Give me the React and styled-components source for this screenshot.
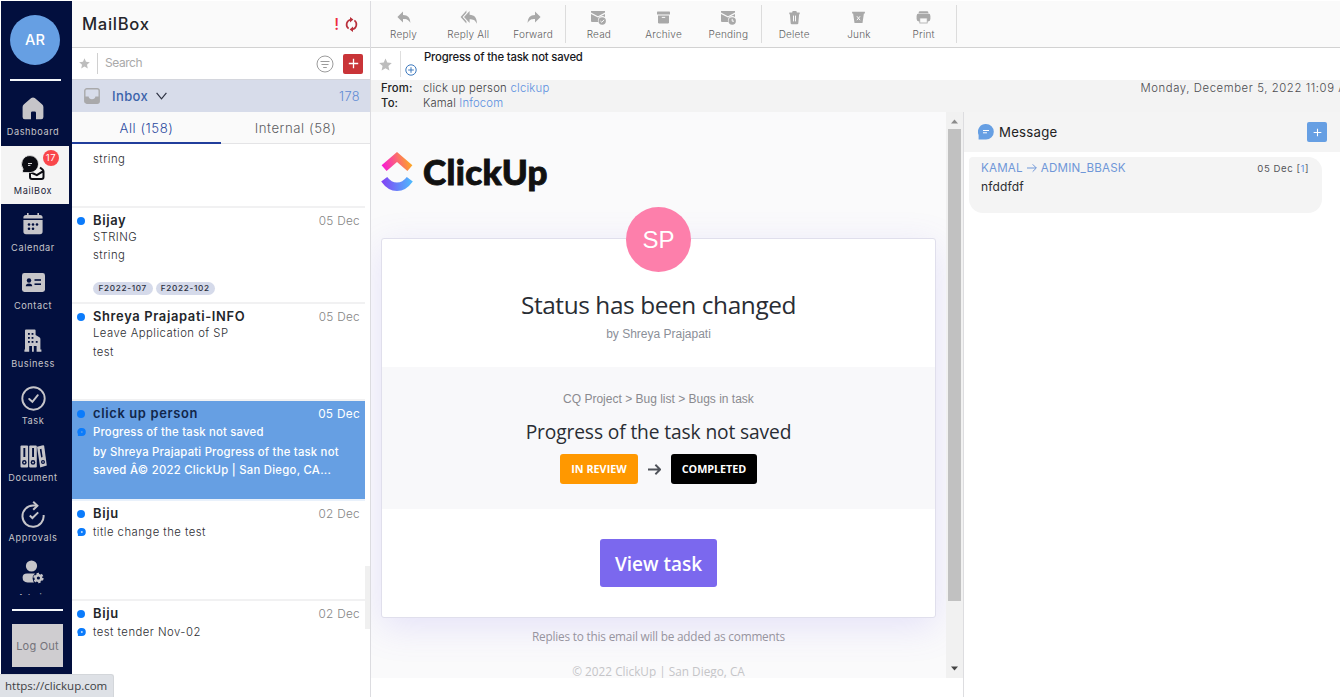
import React from "react";
import styled, { createGlobalStyle, css } from "styled-components";

const NAVY = "#020f3e";
const BLUE = "#669fe3";
const GREY_ICON = "#a9a9a9";
const NAV_GREY = "#c6c5c9";

const GlobalStyle = createGlobalStyle`
  * { box-sizing: border-box; }
  body {
    margin: 0;
    background: #fff;
    font-family: Inter, "Liberation Sans", sans-serif;
    color: #222;
    overflow: hidden;
  }
  button { font: inherit; border: 0; padding: 0; margin: 0; background: none; }
  svg { display: block; flex: none; }
`;

/* ---------- shell ---------- */
const Shell = styled.div`
  position: relative;
  display: flex;
  width: 1340px;
  height: 697px;
  padding: 1px 0 0 1px;
  overflow: hidden;
`;

const Label = styled.span`
  display: block;
  white-space: nowrap;
  font-size: ${(p) => p.$size || 12}px;
  line-height: ${(p) => p.$lh || 16}px;
  font-weight: ${(p) => p.$weight || 400};
  letter-spacing: ${(p) => p.$ls || 0}px;
  color: ${(p) => p.$color || "inherit"};
`;

/* ---------- sidebar ---------- */
const Sidebar = styled.nav`
  display: flex;
  flex-direction: column;
  width: 71px;
  height: 674px;
  background: ${NAVY};
`;

const UserAvatar = styled.div`
  display: flex;
  align-items: center;
  justify-content: center;
  width: 50px;
  height: 50px;
  margin: 14px 0 14px 9px;
  border-radius: 50%;
  background: ${BLUE};
  color: #fff;
  font-size: 14.6px;
  font-weight: 500;
`;

const Rule = styled.div`
  flex: none;
  width: 51px;
  height: 2px;
  margin-left: ${(p) => p.$left}px;
  background: #f4f7fb;
`;

const NavList = styled.div`
  height: 507px;
  margin: 7px 0 14px;
  overflow: hidden;
`;

const NavItem = styled.div`
  position: relative;
  display: flex;
  flex-direction: column;
  align-items: center;
  width: 68px;
  height: 58px;
  padding: 4px 4px 0 0;
  color: ${NAV_GREY};
  ${(p) =>
    p.$active &&
    css`
      background: #f4f4f4;
      color: #1d2438;
      padding-top: 6px;
    `}
`;

const NavIcon = styled.div`
  display: flex;
  align-items: center;
  justify-content: center;
  height: 32px;
`;

const NavLabel = styled(Label)`
  font-size: 9.2px;
  line-height: 14px;
  letter-spacing: 0.58px;
  margin-top: ${(p) => p.$shift ?? 1}px;
`;

const Badge = styled.span`
  position: absolute;
  left: 42px;
  top: 4px;
  width: 16px;
  height: 16px;
  border-radius: 50%;
  background: #f9474b;
  color: #fff;
  font-size: 9.5px;
  line-height: 15px;
  letter-spacing: 0.6px;
  text-align: center;
`;

const LogOut = styled.button`
  width: 51px;
  height: 43px;
  margin: 13px 0 0 11px;
  background: #cfcdd0;
  color: #74737a;
  font-size: 11px;
  letter-spacing: 0.2px;
  white-space: nowrap;
`;

const StatusBar = styled.div`
  position: absolute;
  left: 0;
  bottom: 0;
  width: 114px;
  height: 23px;
  padding-left: 5px;
  border: 1px solid #d3d6da;
  border-left: 0;
  border-bottom: 0;
  border-radius: 0 3px 0 0;
  background: #dee1e6;
  color: #3c4043;
  font: 11.5px/22px "Open Sans", sans-serif;
`;

/* ---------- mail list ---------- */
const ListPane = styled.section`
  position: relative;
  display: flex;
  flex-direction: column;
  width: 299px;
  height: 696px;
  border-right: 1px solid #dcdce0;
`;

const ListHeader = styled.header`
  display: flex;
  align-items: center;
  height: 47px;
  padding: 0 12px 0 10px;
  border-bottom: 1px solid #d2d2d2;
  background: #fafafa;
`;

const HeaderActions = styled.div`
  display: flex;
  align-items: center;
  gap: 6px;
  margin-left: auto;
`;

const SearchRow = styled.div`
  display: flex;
  align-items: center;
  height: 32px;
  padding: 0 7px 0 7px;
  border-bottom: 1px solid #d4d6dd;
`;

const SearchField = styled.div`
  flex: 1;
  height: 21px;
  margin-left: 7px;
  padding-left: 7px;
  border-left: 1px solid #d0d0d0;
  color: #a9a9a9;
  font-size: 12px;
  letter-spacing: -0.45px;
  line-height: 20px;
`;

const SquareButton = styled.button`
  display: flex;
  align-items: center;
  justify-content: center;
  width: 20px;
  height: 20px;
  border-radius: 2px;
  background: ${(p) => p.$bg};
`;

const FolderRow = styled.div`
  display: flex;
  align-items: center;
  height: 32px;
  padding: 0 10px 0 12px;
  background: #d7dcea;
`;

const Tabs = styled.div`
  display: flex;
  height: 32px;
  background: #fafafa;
  border-bottom: 1px solid #e4e4e6;
`;

const Tab = styled.div`
  width: 149px;
  height: 32px;
  border-bottom: 2px solid ${(p) => (p.$active ? "#213e9c" : "transparent")};
  color: ${(p) => (p.$active ? "#2c4a9f" : "#5d5d62")};
  font-size: 13.2px;
  font-weight: 300;
  letter-spacing: 0.55px;
  line-height: 33px;
  text-align: center;
`;

const Mails = styled.div`
  width: 293px;
  flex: 1;
  overflow: hidden;
`;

const Mail = styled.article`
  display: flow-root;
  height: ${(p) => p.$h}px;
  border-bottom: 2px solid #f1f1f2;
  ${(p) =>
    p.$selected &&
    css`
      background: ${BLUE};
      border-color: #e9f1fb;
      color: #fff;
    `}
`;

const MailLine = styled.div`
  display: grid;
  grid-template-columns: 16px 1fr auto;
  align-items: center;
  height: 16px;
  margin-top: ${(p) => p.$mt || 0}px;
  padding: 0 5px 0 5px;
`;

const Dot = styled.i`
  width: 8px;
  height: 8px;
  border-radius: 50%;
  background: #0b7bfb;
`;

const Sender = styled(Label)`
  grid-column: 2;
  padding-top: 1px;
  font-size: 12.9px;
  font-weight: 600;
  letter-spacing: 0.66px;
  color: ${(p) => (p.$selected ? "#11264a" : "#23262b")};
`;

const MailDate = styled(Label)`
  padding-top: 1px;
  font-size: 11.8px;
  font-weight: ${(p) => (p.$selected ? 400 : 300)};
  letter-spacing: 0.3px;
  color: ${(p) => (p.$selected ? "#fff" : "#858585")};
`;

const MailText = styled(Label)`
  grid-column: 2 / 4;
  font-size: 11.3px;
  font-weight: ${(p) => (p.$selected ? 500 : 300)};
  letter-spacing: ${(p) => p.$ls ?? (p.$selected ? 0.22 : 0.48)}px;
  color: ${(p) => (p.$selected ? "#fff" : "#2c2e32")};
`;

const Tags = styled.div`
  display: flex;
  gap: 3px;
  margin: 19px 0 0 21px;
`;

const Tag = styled.span`
  width: 59.5px;
  height: 13px;
  border-radius: 7px;
  background: #d5daea;
  color: #2c3040;
  font-size: 8.2px;
  font-weight: 500;
  letter-spacing: 0.68px;
  line-height: 13px;
  text-align: center;
`;

const ListThumb = styled.div`
  position: absolute;
  right: 0;
  top: 565px;
  width: 5px;
  height: 63px;
  background: #f0f0f0;
`;

/* ---------- reader ---------- */
const Reader = styled.main`
  display: flex;
  flex-direction: column;
  width: 969px;
  height: 696px;
  overflow: hidden;
`;

const Toolbar = styled.div`
  display: flex;
  align-items: center;
  height: 47px;
  border-bottom: 1px solid #d2d2d2;
  background: #fafafa;
`;

const ToolGroup = styled.div`
  display: flex;
  width: 195.3px;
  height: 38px;
  border-right: 1px solid #dcdcdc;
`;

const Tool = styled.button`
  flex: 1;
  display: flex;
  flex-direction: column;
  align-items: center;
  padding: 4px 0 0 0.4px;
  color: ${GREY_ICON};
`;

const SubjectRow = styled.div`
  display: flex;
  height: 32px;
`;

const SubjectStar = styled.div`
  display: flex;
  align-items: center;
  justify-content: center;
  width: 30px;
  height: 26px;
  margin-top: 3px;
  border-right: 1px solid #dedede;
`;

const AddMark = styled.div`
  margin: 16px 7px 0 4px;
`;

const Meta = styled.div`
  display: flex;
  justify-content: space-between;
  height: 32px;
  padding-left: 10px;
  background: #f3f3f3;
`;

const MetaGrid = styled.div`
  display: grid;
  grid-template-columns: 42px auto;
  grid-auto-rows: 15px;
`;

const Link = styled.span`
  color: #5a8fdf;
`;

const DateText = styled(Label)`
  width: 199.5px;
  overflow: hidden;
`;

const Columns = styled.div`
  display: flex;
  flex: 1;
`;

const EmailPane = styled.div`
  display: flex;
  align-items: flex-start;
  width: 593px;
  border-right: 1px solid #dddde0;
`;

const Email = styled.div`
  width: 575px;
  height: 566px;
  padding: 0 10px;
  overflow: hidden;
  background: #fafafb;
`;

const Brand = styled.div`
  display: flex;
  align-items: center;
  height: 126px;
  padding-bottom: 7px;
`;

const BrandName = styled.span`
  margin: 0 0 1px 10px;
  font: 900 35px/40px Lato, sans-serif;
  letter-spacing: 0.4px;
  -webkit-text-stroke: 0.9px #111;
  color: #111;
`;

const Card = styled.div`
  display: flex;
  flex-direction: column;
  align-items: center;
  width: 555px;
  height: 380px;
  border: 1px solid #e0dfec;
  border-radius: 3px;
  background: #fff;
  box-shadow: 0 9px 36px rgba(123, 104, 238, 0.17);
`;

const Initials = styled.div`
  width: 65px;
  height: 65px;
  margin-top: -32px;
  border-radius: 50%;
  background: #fd7fab;
  color: #fff;
  font: 24px/65px "Liberation Sans", sans-serif;
  text-align: center;
  flex: none;
`;

const Segoe = styled(Label)`
  font-family: "Open Sans", sans-serif;
  text-align: center;
`;

const Arial = styled(Label)`
  font-family: "Liberation Sans", sans-serif;
`;

const TaskBand = styled.div`
  display: flex;
  flex-direction: column;
  align-items: center;
  width: 553px;
  height: 142px;
  margin-top: 25px;
  padding-top: 24px;
  background: #f8f8fa;
`;

const StatusRow = styled.div`
  display: flex;
  align-items: center;
  gap: 10px;
  margin-top: 8px;
`;

const Status = styled.div`
  width: ${(p) => p.$w}px;
  height: 30px;
  border-radius: 3px;
  background: ${(p) => p.$bg};
  color: #fff;
  font: 700 10.8px/30px "Open Sans", sans-serif;
  letter-spacing: ${(p) => p.$ls}px;
  text-align: center;
`;

const ViewTask = styled.button`
  width: 117px;
  height: 48px;
  margin-top: 30px;
  border-radius: 3px;
  background: #7b68ee;
  color: #fff;
  font: 600 19px/50px "Open Sans", sans-serif;
`;

const ScrollTrack = styled.div`
  display: flex;
  flex-direction: column;
  align-items: center;
  width: 17px;
  height: 566px;
  padding: 7px 0;
  background: #f1f1f1;
`;

const ScrollThumb = styled.div`
  width: 13px;
  height: 472px;
  margin: 5px 0 auto;
  background: #c1c1c1;
`;

const MessagePane = styled.aside`
  flex: 1;
`;

const MessageHeader = styled.div`
  display: flex;
  align-items: center;
  height: 40px;
  padding: 0 13px 0 14px;
  background: #f4f4f4;
`;

const MessageCard = styled.div`
  width: 353px;
  height: 56px;
  margin: 5px 0 0 5px;
  padding: 3px 13px 0 12px;
  border-radius: 4px 14px 14px 14px;
  background: #f4f4f4;
`;

const CardTop = styled.div`
  display: flex;
  justify-content: space-between;
`;

const SearchGap = styled.div`
  width: 9px;
`;
const FolderName = styled(Label)`
  margin: 0 8px 0 12px;
  font-size: 13px;
  font-weight: 500;
  letter-spacing: 0.4px;
  color: #3b63aa;
`;
const FolderCount = styled(Label)`
  margin-left: auto;
  padding-top: 1px;
  font-size: 12.8px;
  font-weight: 300;
  letter-spacing: 0.4px;
  color: #5f8bd4;
`;
const CardTitle = styled(Segoe)`
  margin-top: 16px;
`;
const CardBy = styled(Arial)`
  margin-top: 4px;
`;
const TaskName = styled(Segoe)`
  margin-top: 11px;
`;
const FootNote = styled(Segoe)`
  margin-top: 10px;
`;
const Copyright = styled(Segoe)`
  margin-top: 19px;
`;
const MessageTitle = styled(Label)`
  margin: 0 auto 0 5px;
`;
const Route = styled.div`
  display: flex;
  align-items: center;
  gap: 4px;
  height: 16px;
  font-size: 11.6px;
  letter-spacing: 0.2px;
  color: #6f97d8;
`;

/* ---------- icons ---------- */
const HomeIcon = () => (
  <svg width="22" height="23" viewBox="0 0 22 23">
    <path fill="currentColor" d="M9.2 1.1 Q11 -.2 12.8 1.1 L20 7.3 Q21.4 8.5 21.4 10 V20 Q21.4 22.2 19.2 22.2 H14 V15.8 Q14 14.4 12.6 14.4 H10.4 Q9 14.4 9 15.8 V22.2 H2.8 Q.6 22.2 .6 20 V10 Q.6 8.5 2 7.3 Z" />
  </svg>
);
const MailboxIcon = () => (
  <svg width="24" height="26" viewBox="0 0 24 26">
    <path fill="none" stroke="#0b0c12" strokeWidth="2" strokeLinejoin="round" d="M9 17 V22 Q9 24 11 24 H20.5 Q22.5 24 22.5 22 V16.5 Q22.5 15.3 21.5 14.5 L19 12.5 M9 17 L15.8 20.2 L22.3 16.2" />
    <path fill="#0b0c12" stroke="#f4f4f4" strokeWidth=".8" d="M9 .6 A8.5 8.5 0 1 1 9 17.6 H1.6 V15.2 L2.2 14.2 A8.5 8.5 0 0 1 9 .6Z" />
    <path stroke="#f4f4f4" strokeWidth=".9" d="M7 8.5 H11 M7 10.4 H9.4" />
  </svg>
);
const CalendarIcon = () => (
  <svg width="20" height="22" viewBox="0 0 20 22">
    <path fill="currentColor" d="M4 0 H5.6 V2 H14.4 V0 H16 V2 H17 Q19.6 2 19.6 4.6 V5.6 H.4 V4.6 Q.4 2 3 2 H4Z M.4 7 H19.6 V18.6 Q19.6 21.2 17 21.2 H3 Q.4 21.2 .4 18.6Z" />
    <g fill={NAVY}>
      <circle cx="6" cy="11.5" r="1.3" />
      <circle cx="10" cy="11.5" r="1.3" />
      <circle cx="14" cy="11.5" r="1.3" />
      <circle cx="6" cy="15.8" r="1.3" />
      <circle cx="10" cy="15.8" r="1.3" />
    </g>
  </svg>
);
const ContactIcon = () => (
  <svg width="23" height="19" viewBox="0 0 23 19">
    <rect width="23" height="19" rx="2.4" fill="currentColor" />
    <g fill={NAVY}>
      <circle cx="7" cy="7.5" r="2.2" />
      <path d="M3.8 13.2 Q3.8 10.6 7 10.6 T10.2 13.2Z" />
      <rect x="12.5" y="6.2" width="6.5" height="1.6" />
      <rect x="12.5" y="10.4" width="6.5" height="1.6" />
    </g>
  </svg>
);
const BusinessIcon = () => (
  <svg width="18" height="23" viewBox="0 0 18 23">
    <path fill="currentColor" d="M1 1.5 Q1 .5 2 .5 H10.6 Q11.6 .5 11.6 1.5 V6 L15.4 8.2 Q16.4 8.8 16.4 10 V20.4 H17.4 V22.8 H12.6 V17 H9.8 V22.8 H8 V17 H5.2 V22.8 H.4 V20.4 H1Z" />
    <g fill={NAVY}>
      {[4, 8, 12].map((y) => (
        <React.Fragment key={y}>
          <rect x="4" y={y} width="1.8" height="1.8" />
          <rect x="7.6" y={y} width="1.8" height="1.8" />
        </React.Fragment>
      ))}
      <rect x="11.8" y="12" width="1.8" height="1.8" />
    </g>
  </svg>
);
const TaskIcon = () => (
  <svg width="25" height="25" viewBox="0 0 25 25" fill="none" stroke="currentColor" strokeWidth="1.9">
    <circle cx="12.5" cy="12.5" r="11.2" />
    <path d="M8.2 13 L11.4 15.8 L16.8 9.2" strokeLinecap="round" />
  </svg>
);
const DocumentIcon = () => (
  <svg width="27" height="23" viewBox="0 0 27 23">
    <g fill="currentColor">
      <rect x=".5" y=".5" width="7.6" height="22" rx="1" />
      <rect x="9.2" y=".5" width="7.6" height="22" rx="1" />
      <path d="M17 1.8 L23 .2 Q24 0 24.2 1 L26.8 20.4 L20.2 22.4 Z" />
    </g>
    <g fill={NAVY}>
      <rect x="3.4" y="3" width="1.9" height="9" />
      <rect x="12.1" y="3" width="1.9" height="9" />
      <path d="M19.8 4.2 L21.4 3.8 L22.6 12 L21.2 12.4Z" />
      <circle cx="4.3" cy="17.4" r="2.3" />
      <circle cx="13" cy="17.4" r="2.3" />
      <circle cx="23" cy="17" r="2" />
    </g>
    <g fill="currentColor">
      <circle cx="4.3" cy="17.4" r=".9" />
      <circle cx="13" cy="17.4" r=".9" />
      <circle cx="23" cy="17" r=".8" />
    </g>
  </svg>
);
const ApprovalsIcon = () => (
  <svg width="24" height="27" viewBox="0 0 24 27" fill="none" stroke="currentColor" strokeWidth="2">
    <path d="M22.6 14 A10.6 10.6 0 1 1 12 4.6 H16" />
    <path d="M12.2 .8 L16.4 4.7 L12.2 8.8" />
    <path d="M8.8 14.6 L11.4 17 L17.2 11.4" />
  </svg>
);
const AdminIcon = () => (
  <svg width="22" height="24" viewBox="0 0 22 24">
    <g fill="currentColor">
      <circle cx="9.5" cy="6" r="5.6" />
      <path d="M5 13.4 H13 Q10.2 15.6 10.6 18.6 Q10.8 20.8 12 22.4 H5.5 Q.6 22.4 .6 17.6 Q.6 13.4 5 13.4Z" />
      <circle cx="16.4" cy="18" r="3.9" />
    </g>
    <circle cx="16.4" cy="18" r="4.3" fill="none" stroke="currentColor" strokeWidth="1.8" strokeDasharray="2.3 2.2" />
    <circle cx="16.4" cy="18" r="1.6" fill={NAVY} />
  </svg>
);
const StarIcon = ({ size }) => (
  <svg width={size} height={size} viewBox="0 0 24 24" fill="#bdbdbd">
    <path d="M12 .8 L15.3 8.4 L23.6 9.2 L17.4 14.8 L19.2 23 L12 18.7 L4.8 23 L6.6 14.8 L.4 9.2 L8.7 8.4Z" />
  </svg>
);
const SyncIcon = () => (
  <svg width="13" height="15" viewBox="0 0 13 15" fill="none" stroke="#b9303b" strokeWidth="1.7">
    <path d="M3.6 11.6 A5 5 0 0 1 5.2 2.8 M9.4 3.4 A5 5 0 0 1 7.8 12.2" />
    <path fill="#b9303b" stroke="none" d="M5 0 L8.4 2.6 L5 5.4Z M8 9.6 L4.6 12.4 L8 15Z" />
  </svg>
);
const FilterIcon = () => (
  <svg width="18" height="18" viewBox="0 0 18 18" fill="none" stroke="#9c9c9c">
    <circle cx="9" cy="9" r="8" />
    <path d="M4.5 6.5 H13.5 M5.5 9.5 H12.5 M7.2 12.5 H10.8" />
  </svg>
);
const PlusIcon = ({ size = 11 }) => (
  <svg width={size} height={size} viewBox="0 0 11 11" stroke="#fff" strokeWidth="1.3">
    <path d="M5.5 .8 V10.2 M.8 5.5 H10.2" />
  </svg>
);
const InboxIcon = () => (
  <svg width="16" height="16" viewBox="0 0 16 16">
    <rect x=".8" y=".8" width="14.4" height="14.4" rx="2" fill="none" stroke="#a9a9ab" strokeWidth="1.4" />
    <path fill="#a9a9ab" d="M.8 8.6 H4.6 Q5 11.2 8 11.2 T11.4 8.6 H15.2 V13.4 Q15.2 15.2 13.4 15.2 H2.6 Q.8 15.2 .8 13.4Z" />
  </svg>
);
const ChevronIcon = () => (
  <svg width="11" height="8" viewBox="0 0 11 8" fill="none" stroke="#2d3242" strokeWidth="1.2">
    <path d="M.6 .8 L5.5 6.8 L10.4 .8" />
  </svg>
);
const BubbleIcon = ({ hole = "#fff" }) => (
  <svg width="9" height="8" viewBox="0 0 9 8">
    <path fill="#0b7bfb" d="M4.8 0 A4 4 0 1 1 4.8 8 H.9 V6 A4 4 0 0 1 4.8 0Z" />
    <circle cx="4.8" cy="4" r="1" fill={hole} opacity=".75" />
  </svg>
);
const MessageIcon = () => (
  <svg width="16" height="16" viewBox="0 0 16 16">
    <path fill={BLUE} d="M8 0 A7.8 7.8 0 1 1 8 15.6 H.6 V11 A7.8 7.8 0 0 1 8 0Z" />
    <path stroke="#fff" strokeWidth="1" d="M5 6.5 H11 M5 8.8 H9" />
  </svg>
);
const AddCircleIcon = () => (
  <svg width="12" height="12" viewBox="0 0 12 12" fill="none" stroke="#3c78bd">
    <circle cx="6" cy="6" r="5.2" />
    <path d="M6 3.2 V8.8 M3.2 6 H8.8" />
  </svg>
);
const ArrowIcon = ({ size, color, width = 1.2 }) => (
  <svg width={size} height={size} viewBox="0 0 12 12" fill="none" stroke={color} strokeWidth={width}>
    <path d="M0 6 H11 M6.8 1.6 L11.2 6 L6.8 10.4" />
  </svg>
);
const ReplyShape = "M6 0 V3.4 C11 3.6 13.2 6 13.4 11.6 C11.4 8.2 9.6 7.6 6 7.6 V11 L.4 5.5Z";
const toolIcons = {
  Reply: <path d={ReplyShape} transform="translate(2 2.5)" />,
  "Reply All": (
    <>
      <path d={ReplyShape} transform="translate(3.6 2) scale(1 1.1)" />
      <path d="M6.4 1.6 V3.8 L2.6 8 L6.4 12.2 V14.4 L.6 8Z" />
    </>
  ),
  Forward: <path d={ReplyShape} transform="translate(16 2.5) scale(-1 1)" />,
  Read: (
    <>
      <path d="M1 2 H15 V3.6 L8 7.2 L1 3.6Z M1 5 L8 8.6 L15 5 V8 A4.4 4.4 0 0 0 8.2 13 H2 Q1 13 1 12Z" />
      <circle cx="12.2" cy="12" r="3.7" />
      <path d="M10.4 12 L11.8 13.3 L14.1 10.8" stroke="#fafafa" fill="none" />
    </>
  ),
  Archive: (
    <>
      <rect x="2" y="2.6" width="13" height="3" rx=".6" />
      <path d="M3 6.6 H14 V13.2 Q14 14.4 12.8 14.4 H4.2 Q3 14.4 3 13.2Z" />
      <path d="M6.8 8.4 H10.2" stroke="#fafafa" />
    </>
  ),
  Pending: (
    <>
      <path d="M1 2 H15 V3.6 L8 7.2 L1 3.6Z M1 5 L8 8.6 L15 5 V8 A4.4 4.4 0 0 0 8.2 13 H2 Q1 13 1 12Z" />
      <circle cx="12.2" cy="12" r="3.7" />
      <path d="M12.2 9.8 V12.2 H14" stroke="#fafafa" fill="none" />
    </>
  ),
  Delete: (
    <g transform="translate(.5 0)">
      <path d="M2.8 3.4 H5.6 L6.2 2 H9.8 L10.4 3.4 H13.2 V5.2 H12.6 L11.8 14.4 Q11.6 15.2 10.8 15.2 H5.2 Q4.4 15.2 4.2 14.4 L3.4 5.2 H2.8Z" />
      <path d="M7 6.6 V12.4 M9 6.6 V12.4" stroke="#fafafa" />
    </g>
  ),
  Junk: (
    <g transform="translate(.5 0)">
      <path d="M1.6 2.8 H14.4 V4.4 H13.4 L12 14 H4 L2.6 4.4 H1.6Z" />
      <path d="M6.4 7.2 L9.6 11.2 M9.6 7.2 L6.4 11.2" stroke="#fafafa" />
    </g>
  ),
  Print: (
    <>
      <path d="M4.6 2.2 H12.4 Q13.4 2.2 13.4 4 H3.6 Q3.6 2.2 4.6 2.2Z" />
      <rect x="1.6" y="4.6" width="13.8" height="7.8" rx="2.4" />
      <rect x="4.8" y="9" width="7.4" height="5" fill="#fafafa" stroke="#a9a9a9" strokeWidth=".8" />
    </>
  ),
};
const ClickUpMark = () => (
  <svg width="32" height="40" viewBox="0 0 32 40">
    <defs>
      <linearGradient id="roof" x1="0" y1=".6" x2="1" y2=".4">
        <stop offset="0" stopColor="#f81bd4" />
        <stop offset=".5" stopColor="#fb6577" />
        <stop offset="1" stopColor="#fdb315" />
      </linearGradient>
      <linearGradient id="bowl">
        <stop offset="0" stopColor="#8440f5" />
        <stop offset="1" stopColor="#4cbcfd" />
      </linearGradient>
    </defs>
    <path fill="url(#roof)" d="M16 0 L31.4 13.2 L26.4 19 L16 10 L5.6 19 L.6 13.2Z" />
    <path fill="url(#bowl)" d="M6.2 25 Q10.4 30.6 16 30.6 T25.8 25 L31.8 29.4 Q25 39 16 39 T.2 29.4Z" />
  </svg>
);

/* ---------- data ---------- */
const navItems = [
  { label: "Dashboard", icon: <HomeIcon /> },
  { label: "MailBox", icon: <MailboxIcon />, active: true, badge: "17", shift: 0 },
  { label: "Calendar", icon: <CalendarIcon /> },
  { label: "Contact", icon: <ContactIcon /> },
  { label: "Business", icon: <BusinessIcon /> },
  { label: "Task", icon: <TaskIcon />, shift: 0 },
  { label: "Document", icon: <DocumentIcon />, shift: -1 },
  { label: "Approvals", icon: <ApprovalsIcon /> },
  { label: "Admin", icon: <AdminIcon />, shift: 3 },
];

const toolGroups = [
  ["Reply", "Reply All", "Forward"],
  ["Read", "Archive", "Pending"],
  ["Delete", "Junk", "Print"],
];

export default function App() {
  return (
    <>
      <GlobalStyle />
      <Shell>
        <Sidebar>
          <UserAvatar>AR</UserAvatar>
          <Rule $left={9} />
          <NavList>
            {navItems.map((n) => (
              <NavItem key={n.label} $active={n.active}>
                <NavIcon>{n.icon}</NavIcon>
                <NavLabel $shift={n.shift}>{n.label}</NavLabel>
                {n.badge && <Badge>{n.badge}</Badge>}
              </NavItem>
            ))}
          </NavList>
          <Rule $left={11} />
          <LogOut>Log Out</LogOut>
        </Sidebar>

        <ListPane>
          <ListHeader>
            <Label $size={16.6} $lh={20} $weight={500} $ls={0.7} $color="#25262b">MailBox</Label>
            <HeaderActions>
              <Label $size={16} $weight={500} $color="#ee2b3c">!</Label>
              <SyncIcon />
            </HeaderActions>
          </ListHeader>
          <SearchRow>
            <StarIcon size={11} />
            <SearchField>Search</SearchField>
            <FilterIcon />
            <SearchGap />
            <SquareButton $bg="#c93438"><PlusIcon /></SquareButton>
          </SearchRow>
          <FolderRow>
            <InboxIcon />
            <FolderName>Inbox</FolderName>
            <ChevronIcon />
            <FolderCount>178</FolderCount>
          </FolderRow>
          <Tabs>
            <Tab $active>All (158)</Tab>
            <Tab>Internal (58)</Tab>
          </Tabs>
          <Mails>
            <Mail $h={64}>
              <MailLine $mt={7}><MailText>string</MailText></MailLine>
            </Mail>
            <Mail $h={96}>
              <MailLine $mt={4}><Dot /><Sender>Bijay</Sender><MailDate>05 Dec</MailDate></MailLine>
              <MailLine $mt={1}><MailText $ls={0.45}>STRING</MailText></MailLine>
              <MailLine $mt={2}><MailText>string</MailText></MailLine>
              <Tags><Tag>F2022-107</Tag><Tag>F2022-102</Tag></Tags>
            </Mail>
            <Mail $h={97}>
              <MailLine $mt={4}><Dot /><Sender>Shreya Prajapati-INFO</Sender><MailDate>05 Dec</MailDate></MailLine>
              <MailLine $mt={1}><MailText>Leave Application of SP</MailText></MailLine>
              <MailLine $mt={3}><MailText>test</MailText></MailLine>
            </Mail>
            <Mail $h={100} $selected>
              <MailLine $mt={4}><Dot /><Sender $selected>click up person</Sender><MailDate $selected>05 Dec</MailDate></MailLine>
              <MailLine $mt={3}><BubbleIcon hole={BLUE} /><MailText $selected>Progress of the task not saved</MailText></MailLine>
              <MailLine $mt={4}><MailText $selected>by Shreya Prajapati Progress of the task not</MailText></MailLine>
              <MailLine $mt={2}><MailText $selected $ls={0.28}>saved Â© 2022 ClickUp | San Diego, CA...</MailText></MailLine>
            </Mail>
            <Mail $h={100}>
              <MailLine $mt={4}><Dot /><Sender>Biju</Sender><MailDate>02 Dec</MailDate></MailLine>
              <MailLine $mt={3}><BubbleIcon /><MailText>title change the test</MailText></MailLine>
            </Mail>
            <Mail $h={100}>
              <MailLine $mt={4}><Dot /><Sender>Biju</Sender><MailDate>02 Dec</MailDate></MailLine>
              <MailLine $mt={3}><BubbleIcon /><MailText>test tender Nov-02</MailText></MailLine>
            </Mail>
          </Mails>
          <ListThumb />
        </ListPane>

        <Reader>
          <Toolbar>
            {toolGroups.map((group) => (
              <ToolGroup key={group[0]}>
                {group.map((name) => (
                  <Tool key={name}>
                    <svg width="17" height="17" viewBox="0 0 17 17" fill="currentColor">{toolIcons[name]}</svg>
                    <Label $size={10} $lh={17} $ls={0.2} $weight={300} $color="#5f5f62">{name}</Label>
                  </Tool>
                ))}
              </ToolGroup>
            ))}
          </Toolbar>
          <SubjectRow>
            <SubjectStar><StarIcon size={13} /></SubjectStar>
            <AddMark><AddCircleIcon /></AddMark>
            <Label $size={11.3} $lh={18} $weight={500} $ls={-0.18} $color="#17181c">Progress of the task not saved</Label>
          </SubjectRow>
          <Meta>
            <MetaGrid>
              <Label $size={11.3} $weight={500} $ls={0.15} $color="#222">From:</Label>
              <Label $size={11.3} $ls={0.25} $weight={300} $color="#3f3f43">click up person <Link>clcikup</Link></Label>
              <Label $size={11.3} $weight={500} $ls={0.15} $color="#222">To:</Label>
              <Label $size={11.3} $ls={0.15} $weight={300} $color="#3f3f43">Kamal <Link>Infocom</Link></Label>
            </MetaGrid>
            <DateText $size={11.3} $ls={0.6} $weight={300} $color="#4c4c50">Monday, December 5, 2022 11:09 AM</DateText>
          </Meta>
          <Columns>
            <EmailPane>
              <Email>
                <Brand>
                  <ClickUpMark />
                  <BrandName>ClickUp</BrandName>
                </Brand>
                <Card>
                  <Initials>SP</Initials>
                  <CardTitle $size={24.4} $lh={34} $ls={-0.4} $color="#292d34">Status has been changed</CardTitle>
                  <CardBy $size={12} $color="#8b8f98">by Shreya Prajapati</CardBy>
                  <TaskBand>
                    <Arial $size={12} $color="#8a8a8f">CQ Project &gt; Bug list &gt; Bugs in task</Arial>
                    <TaskName $size={19.2} $lh={28} $ls={-0.12} $color="#292d34">Progress of the task not saved</TaskName>
                    <StatusRow>
                      <Status $w={78} $bg="#ff9800" $ls={0}>IN REVIEW</Status>
                      <ArrowIcon size={13} color="#4f5259" width={1.7} />
                      <Status $w={86} $bg="#000" $ls={-0.05}>COMPLETED</Status>
                    </StatusRow>
                  </TaskBand>
                  <ViewTask>View task</ViewTask>
                </Card>
                <FootNote $size={11.8} $ls={-0.2} $color="#97949f">Replies to this email will be added as comments</FootNote>
                <Copyright $size={11.8} $color="#c5c5c8">© 2022 ClickUp | San Diego, CA</Copyright>
              </Email>
              <ScrollTrack>
                <svg width="7" height="5" viewBox="0 0 7 5"><path fill="#8b8b8b" d="M0 4.5 L3.5 .5 L7 4.5Z" /></svg>
                <ScrollThumb />
                <svg width="7" height="5" viewBox="0 0 7 5"><path fill="#444" d="M0 .5 L3.5 4.5 L7 .5Z" /></svg>
              </ScrollTrack>
            </EmailPane>
            <MessagePane>
              <MessageHeader>
                <MessageIcon />
                <MessageTitle $size={13.2} $ls={0.25} $color="#222">Message</MessageTitle>
                <SquareButton $bg={BLUE}><PlusIcon size={9} /></SquareButton>
              </MessageHeader>
              <MessageCard>
                <CardTop>
                  <Route>KAMAL <ArrowIcon size={10} color="#6f97d8" /> ADMIN_BBASK</Route>
                  <Label $size={9.6} $lh={18} $ls={0.55} $color="#55565a">05 Dec [<Link>1</Link>]</Label>
                </CardTop>
                <Label $size={12} $lh={18} $ls={0.15} $color="#2c2d31">nfddfdf</Label>
              </MessageCard>
            </MessagePane>
          </Columns>
        </Reader>
        <StatusBar>https://clickup.com</StatusBar>
      </Shell>
    </>
  );
}
